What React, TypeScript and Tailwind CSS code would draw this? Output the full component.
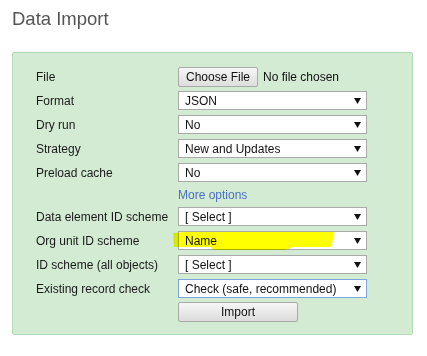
import React from "react";

const font = { fontFamily: '"Liberation Sans", Arial, sans-serif' };

function Arrow() {
  return (
    <svg width="7" height="6" viewBox="0 0 7 6" className="shrink-0">
      <path d="M0 0h7L3.5 6z" fill="#111" />
    </svg>
  );
}

function Select({ value, focused }: { value: string; focused?: boolean }) {
  return (
    <div
      className={`flex h-[19px] w-[189px] items-center justify-between bg-white pl-[6px] pr-[5px] text-[12px] text-[#111] border ${
        focused ? "border-[#7ea6dd]" : "border-[#a9a9a9]"
      }`}
    >
      <span className="relative z-10">{value}</span>
      <Arrow />
    </div>
  );
}

function Row({ label, children }: { label: string; children: React.ReactNode }) {
  return (
    <>
      <div className="flex h-[19px] items-center text-[12px] text-[#1a1a1a]">{label}</div>
      <div className="flex h-[19px] items-center">{children}</div>
    </>
  );
}

export default function App() {
  return (
    <div className="h-[356px] w-[427px] bg-white pl-3" style={font}>
      <h1 className="pt-[8px] text-[18.5px] leading-[22px] text-[#555]">Data Import</h1>

      <div className="mt-[22px] h-[283px] w-[401px] rounded-[2px] border border-[#b3dbb3] bg-[#d3ead3] pl-[23px] pt-[14px]">
        <div className="grid grid-cols-[142px_189px] gap-y-[5px]">
          <Row label="File">
            <div className="flex items-center">
              <button className="flex h-[20px] w-[80px] items-center justify-center rounded-[2px] border border-[#a9a9a9] bg-gradient-to-b from-[#f6f6f6] to-[#dedede] text-[12px] text-[#111]">
                Choose File
              </button>
              <span className="ml-[5px] text-[12px] text-[#111]">No file chosen</span>
            </div>
          </Row>
          <Row label="Format">
            <Select value="JSON" />
          </Row>
          <Row label="Dry run">
            <Select value="No" />
          </Row>
          <Row label="Strategy">
            <Select value="New and Updates" />
          </Row>
          <Row label="Preload cache">
            <Select value="No" />
          </Row>

          <div className="h-[15px]" />
          <div className="flex h-[15px] items-center text-[12px] text-[#4a72c4]">More options</div>

          <Row label="Data element ID scheme">
            <Select value="[ Select ]" />
          </Row>
          <Row label="Org unit ID scheme">
            <div className="relative">
              <Select value="Name" />
              <svg
                width="170"
                height="22"
                viewBox="0 0 170 22"
                className="pointer-events-none absolute left-[-5px] top-[0px] mix-blend-multiply"
              >
                <path
                  d="M0 2 L6 1.5 L11 1 L160 1 L161.5 2 L158 16 L120 16 L112 19 L40 19 L38 16 L6 16 L1 16 Z"
                  fill="#ffff00"
                />
              </svg>
            </div>
          </Row>
          <Row label="ID scheme (all objects)">
            <Select value="[ Select ]" />
          </Row>
          <Row label="Existing record check">
            <Select value="Check (safe, recommended)" focused />
          </Row>

          <div />
          <div className="-mt-[1px]">
            <button className="flex h-[20px] w-[120px] items-center justify-center rounded-[2px] border border-[#a9a9a9] bg-gradient-to-b from-[#f6f6f6] to-[#dcdcdc] text-[12px] text-[#111]">
              Import
            </button>
          </div>
        </div>
      </div>
    </div>
  );
}
